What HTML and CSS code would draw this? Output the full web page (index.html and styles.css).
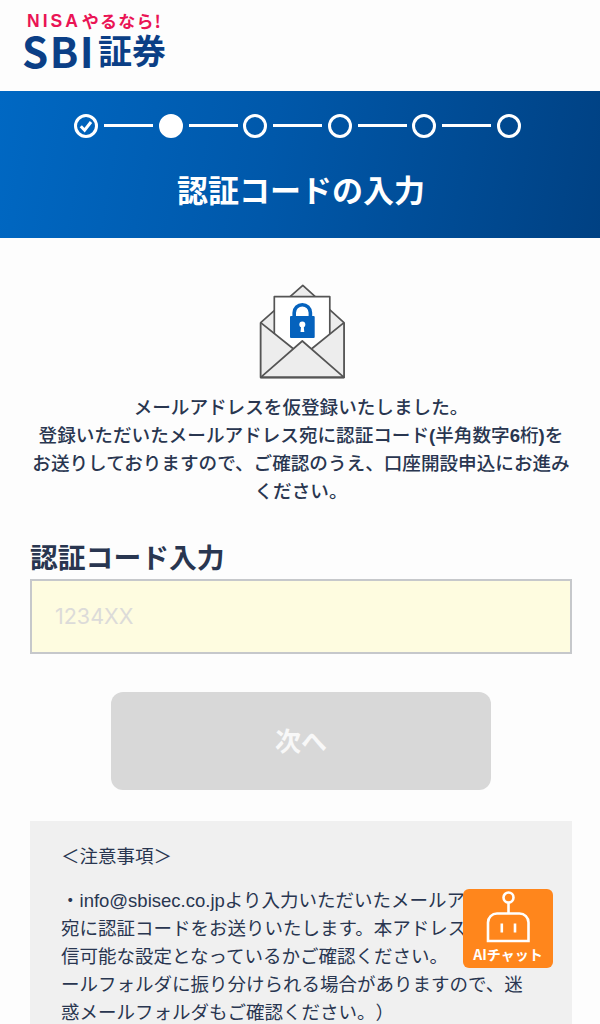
FILE: index.html
```
<!DOCTYPE html>
<html lang="ja">
<head>
    <meta charset="UTF-8">
    <meta name="viewport" content="width=device-width, initial-scale=1">
    <title>認証コードの入力</title>
    <link rel="stylesheet" href="styles.css">
</head>
<body>

    <header class="site-header">
        <p class="catch">NISA<span class="catch-kana">やるなら!</span></p>
        <p class="logo"><span class="logo-latin">SBI</span><span class="logo-kanji">証券</span></p>
    </header>

    <section class="hero">
        <div class="steps">
            <span class="step">
                <svg viewBox="0 0 24 24" width="24" height="24">
                    <path d="M6.800 12.200l3.800 4 6.400-8.200" fill="none" stroke="#fff" stroke-width="3"/>
                </svg>
            </span>
            <span class="bar"></span>
            <span class="step current"></span>
            <span class="bar"></span>
            <span class="step"></span>
            <span class="bar"></span>
            <span class="step"></span>
            <span class="bar"></span>
            <span class="step"></span>
            <span class="bar"></span>
            <span class="step"></span>
        </div>
        <h1>認証コードの入力</h1>
    </section>

    <main class="content">
        <!-- 封筒アイコン -->
        <svg class="mail-icon" viewBox="0 0 88 96" width="88" height="96">
            <g stroke="#555" stroke-width="1.7" stroke-linejoin="round">
                <path d="M1.700 39.700L43.800 2.300 85 39.700v54.600H1.700z" fill="#ededed"/>
                <path d="M1.700 39.700L34 65.500 53 65.500 85 39.700v54.600H1.700z" fill="#ededed" stroke="none"/>
                <path d="M15.300 50.600L34 65.500l9.500-7.500 9.800 7.500 17.500-14.300V13.700H15.300z" fill="#fff" stroke="none"/>
                <path d="M15.300 51V13.700h55.500V51" fill="none"/>
                <path d="M1.700 39.700L34 65.500M85 39.700L53 65.500" fill="none"/>
                <path d="M1.700 94.300L43.300 58 85 94.300z" fill="#ededed"/>
                <path d="M1.700 39.700v54.600H85V39.700" fill="none"/>
            </g>
            <path d="M35.200 34v-4.200a8.100 8.100 0 0 1 16.200 0V34" fill="none" stroke="#0562bd" stroke-width="3.600"/>
            <rect x="31" y="33" width="24.700" height="22" rx="1" fill="#0562bd"/>
            <circle cx="43.300" cy="41.500" r="3" fill="#fff"/>
            <path d="M42.200 42h2.400l.7 7h-3.800z" fill="#fff"/>
        </svg>

        <p class="message">メールアドレスを仮登録いたしました。<br>登録いただいたメールアドレス宛に認証コード<b>(</b>半角数字<b>6</b>桁<b>)</b>を<br>お送りしておりますので、ご確認のうえ、口座開設申込にお進み<br>ください。</p>

        <form class="code-form">
            <label for="authCode">認証コード入力</label>
            <input type="text" id="authCode" placeholder="1234XX">
            <button type="submit" disabled>次へ</button>
        </form>

        <div class="notes">
            <p class="notes-title">＜注意事項＞</p>
            <p class="notes-text">・<span class="mail">info@sbisec.co.jp</span>より入力いただいたメールア<br>宛に認証コードをお送りいたします。本アドレス<br>信可能な設定となっているかご確認ください。<br>ールフォルダに振り分けられる場合がありますので、迷<br>惑メールフォルダもご確認ください。）</p>
        </div>
    </main>

    <!-- AIチャット -->
    <a class="chat" href="#">
        <svg viewBox="0 0 44 54" width="44" height="54">
            <g fill="none" stroke="#fff" stroke-width="2.600">
                <circle cx="22.500" cy="7.500" r="5"/>
                <path d="M22.500 12.500v11"/>
                <path d="M2 51V32.500a9 9 0 0 1 9-9h22.500a9 9 0 0 1 9 9V51z"/>
                <path d="M15.800 33.500v9M29 33.500v9"/>
            </g>
        </svg>
        <span>AIチャット</span>
    </a>

</body>
</html>
```
FILE: styles.css
```
* {
    box-sizing: border-box;
}

body {
    margin: 0;
    height: 1024px;
    overflow: hidden;
    background-color: #fdfdfd;
    color: #293650;
    font-family: "Liberation Sans", "Noto Sans CJK JP", sans-serif;
    font-size: 18.6px;
    text-spacing-trim: space-all;
}

h1, p {
    margin: 0;
}

/* ヘッダー */
.site-header {
    height: 91px;
    padding: 12px 0 0 22px;
}

.catch {
    display: flex;
    align-items: center;
    height: 18px;
    padding-left: 5px;
    color: #ea1455;
    font-size: 17.5px;
    font-weight: bold;
    line-height: 18px;
    letter-spacing: 3px;
}

.catch-kana {
    margin-left: 1px;
    font-family: "Noto Sans CJK JP", sans-serif;
    font-size: 17px;
    letter-spacing: 1.2px;
}

.logo {
    display: flex;
    align-items: center;
    height: 39px;
    color: #0b3f86;
    font-family: "Noto Sans CJK JP", sans-serif;
    line-height: 39px;
    white-space: nowrap;
}

.logo-latin {
    width: 76px;
    font-size: 42px;
    font-weight: bold;
    letter-spacing: 1.5px;
}

.logo-kanji {
    font-size: 34px;
    font-weight: bold;
}

/* ステップ */
.hero {
    height: 147px;
    padding-top: 22px;
    background: linear-gradient(100deg, #0068c3 0%, #0058aa 45%, #004183 100%);
    color: #fff;
}

.steps {
    display: flex;
    align-items: center;
    justify-content: center;
    gap: 5.75px;
    height: 25px;
    padding-right: 5px;
}

.step {
    display: flex;
    align-items: center;
    justify-content: center;
    flex: none;
    width: 24px;
    height: 24px;
    border: 3px solid #fff;
    border-radius: 50%;
}

.step svg {
    flex: none;
}

.step.current {
    background-color: #fff;
}

.bar {
    width: 49px;
    height: 3px;
    margin-bottom: 1px;
    background-color: #fff;
}

.hero h1 {
    margin-top: 26px;
    padding-left: 2px;
    font-family: "Noto Sans CJK JP", sans-serif;
    font-size: 31px;
    font-weight: bold;
    line-height: 50px;
    text-align: center;
}

/* 本文 */
.content {
    padding: 45px 28px 0 30px;
}

.mail-icon {
    display: block;
    margin: 0 auto;
    padding-left: 3px;
    width: 91px;
}

.message {
    margin: 15px -10px 0;
    font-weight: 500;
    line-height: 28px;
    text-align: center;
    white-space: nowrap;
}

.code-form label {
    display: block;
    margin-top: 33px;
    font-size: 27.8px;
    font-weight: bold;
    line-height: 40px;
}

.code-form input {
    display: block;
    width: 100%;
    height: 75px;
    padding: 0 24px 2px 23px;
    background-color: #fefce0;
    border: 2px solid #c6c8cb;
    border-radius: 0;
    font-family: Inter, sans-serif;
    font-size: 21.5px;
}

.code-form input::placeholder {
    color: #dcdbd9;
}

.code-form button {
    display: block;
    width: 380px;
    height: 98px;
    margin: 38px auto 0;
    padding: 0 0 4px;
    background-color: #d8d8d8;
    border: none;
    border-radius: 12px;
    color: #f8f8f8;
    font-family: "Noto Sans CJK JP", sans-serif;
    font-size: 26px;
    font-weight: bold;
}

/* 注意事項 */
.notes {
    height: 230px;
    margin-top: 31px;
    padding: 22px 0 0 31px;
    background-color: #f0f0f0;
    font-size: 18.5px;
    line-height: 28px;
    white-space: nowrap;
}

.notes-text {
    margin-top: 16px;
}

/* チャットボタン */
.chat {
    position: fixed;
    top: 889px;
    left: 463px;
    display: flex;
    flex-direction: column;
    align-items: center;
    width: 90px;
    height: 79px;
    padding-top: 1px;
    background-color: #ff861c;
    border-radius: 6px;
    color: #fff;
    font-family: "Noto Sans CJK JP", sans-serif;
    font-size: 14px;
    font-weight: bold;
    line-height: 20px;
    text-decoration: none;
    white-space: nowrap;
}
```
